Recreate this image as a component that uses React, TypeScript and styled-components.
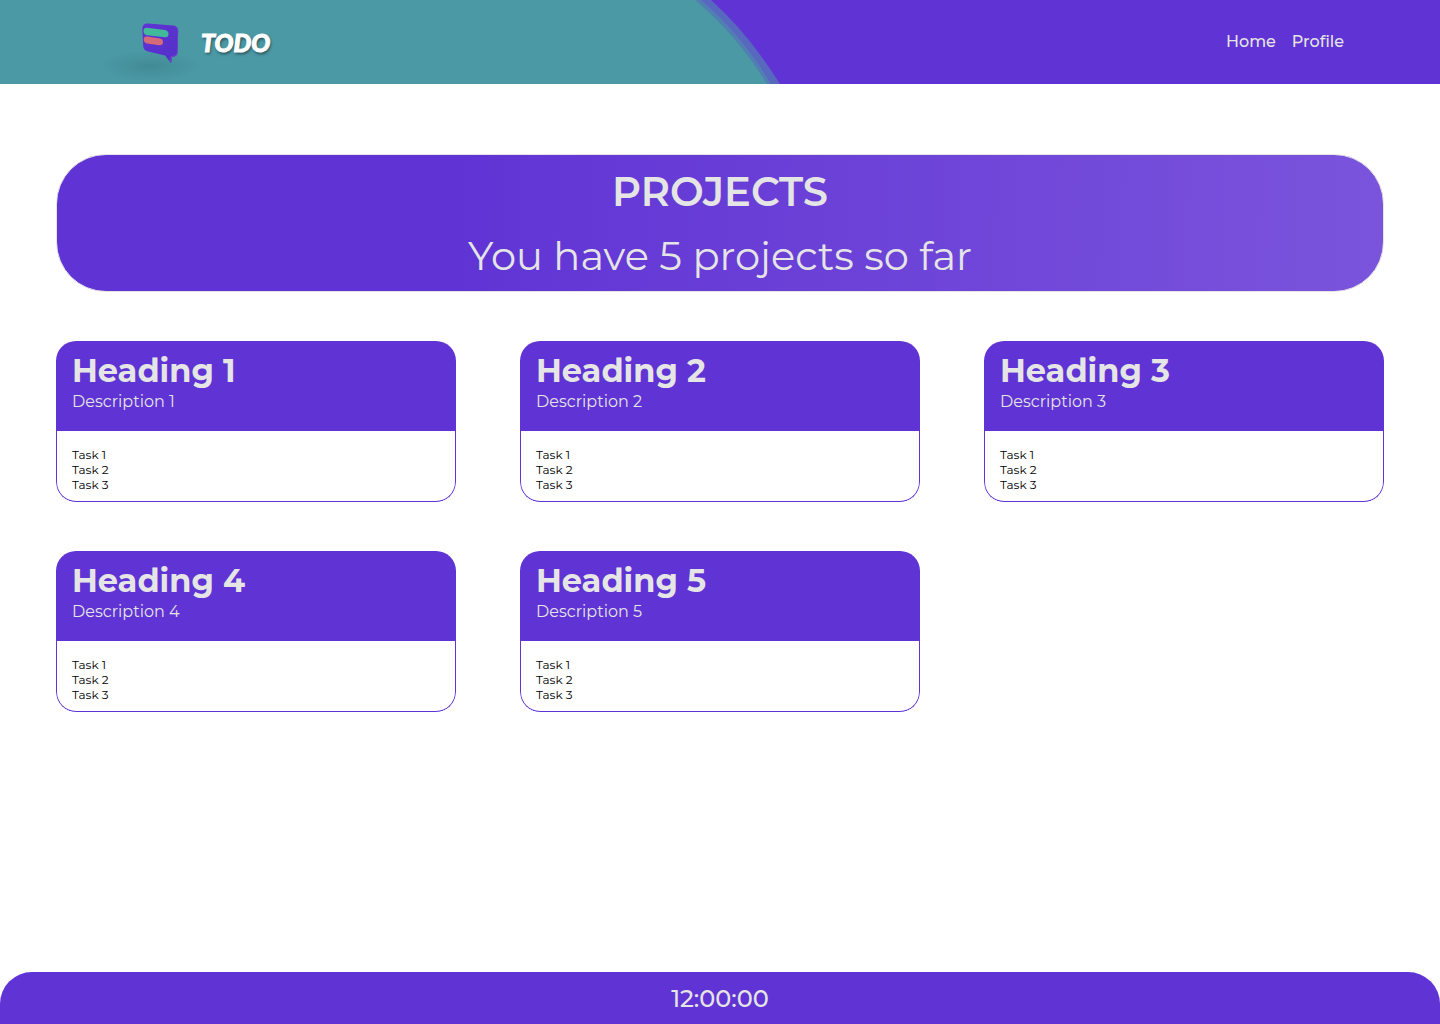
import React from "react";
import styled, { createGlobalStyle } from "styled-components";

const purple = "#5f33d4";
const light = "#e5e5e5";

const GlobalStyle = createGlobalStyle`
  *, *::before, *::after { box-sizing: border-box; }
  body {
    margin: 0;
    background: #ffffff;
    color: #000000;
    font-family: Montserrat, Inter, "Liberation Sans", sans-serif;
  }
  h1, h2, p, ul { margin: 0; padding: 0; }
`;

const Page = styled.div`
  min-height: 100vh;
  display: flex;
  flex-direction: column;
`;

const Header = styled.header`
  position: relative;
  display: flex;
  align-items: center;
  justify-content: space-between;
  height: 84px;
  padding: 0 96px;
  overflow: hidden;
  background: ${purple};
`;

const Backdrop = styled.svg`
  position: absolute;
  top: 0;
  left: 0;
`;

const Brand = styled.a`
  position: relative;
  display: flex;
  align-items: center;
  text-decoration: none;
  color: #ffffff;
`;

const BrandName = styled.span`
  font-family: Lato, "Open Sans", sans-serif;
  font-size: 25px;
  font-weight: 900;
  font-style: italic;
  -webkit-text-stroke: 1px #ffffff;
  text-shadow: 1px 2px 3px rgba(0, 0, 0, 0.5);
`;

const Nav = styled.nav`
  position: relative;
  display: flex;
  gap: 16px;
`;

const NavLink = styled.a`
  color: ${light};
  font-size: 16px;
  font-weight: 500;
  line-height: 20px;
  text-decoration: none;
`;

const Main = styled.main`
  flex: 1;
  padding: 70px 56px 48px;
`;

const Banner = styled.section`
  display: flex;
  flex-direction: column;
  align-items: center;
  padding: 12px 16px 10px;
  border: 1px solid ${light};
  border-radius: 50px;
  background: linear-gradient(92deg, ${purple} 28%, #7b54dc 100%);
  color: ${light};
  text-align: center;
`;

const BannerTitle = styled.h1`
  font-size: 40px;
  font-weight: 600;
  line-height: 50px;
`;

const BannerText = styled.p`
  padding-top: 14px;
  font-size: 40px;
  font-weight: 400;
  line-height: 50px;
`;

const Grid = styled.div`
  display: grid;
  grid-template-columns: repeat(auto-fill, minmax(360px, 1fr));
  gap: 49px 64px;
  margin-top: 49px;
`;

const Card = styled.article`
  overflow: hidden;
  border-radius: 20px;
`;

const CardHeader = styled.header`
  height: 90px;
  padding: 10px 16px;
  background: ${purple};
  color: ${light};
`;

const CardTitle = styled.h2`
  font-size: 32px;
  font-weight: 700;
  line-height: 40px;
`;

const CardText = styled.p`
  font-size: 16px;
  line-height: 22px;
`;

const Tasks = styled.ul`
  list-style: none;
  border: 1px solid ${purple};
  border-top: 0;
  border-radius: 0 0 20px 20px;
`;

const Task = styled.li`
  padding: 0 15px;
  font-size: 12px;
  line-height: 15px;
  &:first-child { padding-top: 16px; }
  &:last-child { padding-bottom: 9px; }
`;

const Footer = styled.footer`
  display: flex;
  align-items: center;
  justify-content: center;
  height: 52px;
  padding-top: 2px;
  border-radius: 32px 32px 0 0;
  background: ${purple};
  color: ${light};
  font-size: 24px;
  font-weight: 500;
  line-height: 30px;
`;

function Logo() {
  return (
    <svg width="105" height="84" viewBox="96 0 105 84" aria-hidden="true">
      <defs>
        <radialGradient id="ground">
          <stop offset="0" stopColor="#28656c" stopOpacity="0.28" />
          <stop offset="1" stopColor="#28656c" stopOpacity="0" />
        </radialGradient>
        <linearGradient id="bubble" x1="0" y1="0" x2="1" y2="1">
          <stop offset="0" stopColor="#6033d4" />
          <stop offset="1" stopColor="#5430c8" />
        </linearGradient>
      </defs>
      <ellipse cx="150" cy="66" rx="50" ry="15" fill="url(#ground)" />
      <path d="M148 23.5 L173 25.5 Q178.2 26 178.2 31 L177.5 53 Q177.3 56.5 172 57 L171 63 Q168.5 60 165 55.5 L148 51.5 Q143.5 50.5 143.2 46 L142.3 29 Q142.3 23 148 23.5 Z" fill="url(#bubble)" />
      <path d="M173 25.5 Q178.2 26 178.2 31 L177.5 53 Q177.3 56.5 172 57 L171 63 L170 60 L170.8 56 Q176.6 56 176.8 52 L177.4 31 Q177.4 27 173 25.5 Z" fill="#6b43cc" />
      <path d="M147 27.7 L165 30 Q168.5 30.8 168.5 34 Q168.5 37.4 165 37.2 L147 35.2 Q143.5 34.5 143.5 31 Q143.6 27.5 147 27.7 Z" fill="#42ba9a" />
      <path d="M147 36.5 L160 38.5 Q163.2 39.3 163 42.3 Q162.8 45.6 159.5 45.3 L147 43.5 Q143.8 42.7 143.7 39.5 Q143.8 36 147 36.5 Z" fill="#d76a78" />
    </svg>
  );
}

const projects = [1, 2, 3, 4, 5];
const tasks = ["Task 1", "Task 2", "Task 3"];

export default function App() {
  return (
    <Page>
      <GlobalStyle />
      <Header>
        <Backdrop width="800" height="84" viewBox="0 0 800 84" aria-hidden="true">
          <path d="M0 0 H711 Q749 34 780 84 H0 Z" fill="#5868be" />
          <path d="M0 0 H701 Q741 34 771 84 H0 Z" fill="#527fb3" />
          <path d="M0 0 H695 Q736 34 767 84 H0 Z" fill="#4b99a5" />
        </Backdrop>
        <Brand href="#">
          <Logo />
          <BrandName>TODO</BrandName>
        </Brand>
        <Nav>
          <NavLink href="#">Home</NavLink>
          <NavLink href="#">Profile</NavLink>
        </Nav>
      </Header>
      <Main>
        <Banner>
          <BannerTitle>PROJECTS</BannerTitle>
          <BannerText>You have 5 projects so far</BannerText>
        </Banner>
        <Grid>
          {projects.map((n) => (
            <Card key={n}>
              <CardHeader>
                <CardTitle>Heading {n}</CardTitle>
                <CardText>Description {n}</CardText>
              </CardHeader>
              <Tasks>
                {tasks.map((task) => (
                  <Task key={task}>{task}</Task>
                ))}
              </Tasks>
            </Card>
          ))}
        </Grid>
      </Main>
      <Footer>
        <time>12:00:00</time>
      </Footer>
    </Page>
  );
}
